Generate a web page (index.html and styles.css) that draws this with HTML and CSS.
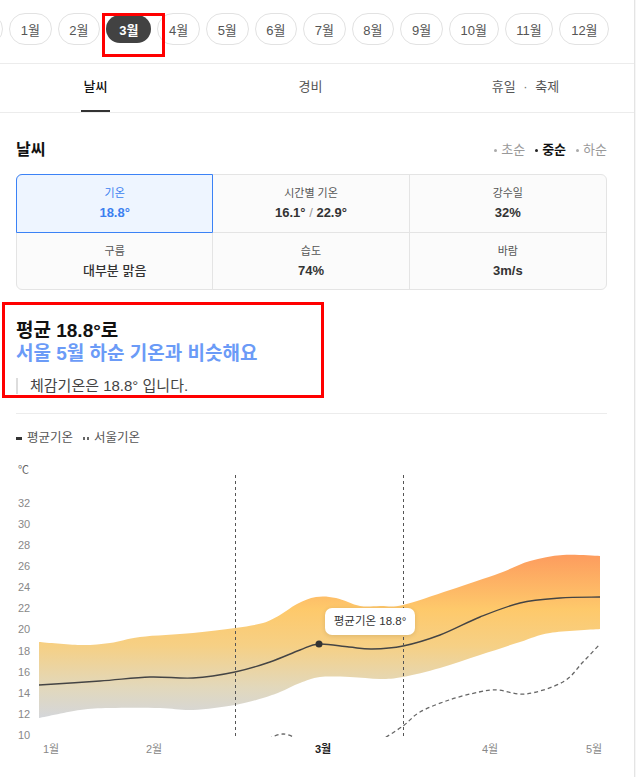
FILE: index.html
```html
<!DOCTYPE html>
<html lang="ko">
<head>
  <meta charset="UTF-8">
  <meta name="viewport" content="width=device-width, initial-scale=1.0">
  <title>여행 날씨 - 3월</title>
  <link rel="stylesheet" href="styles.css">
</head>
<body>
  <div class="page">
    <nav class="months">
      <div class="months-track">
        <button class="chip chip--prev" aria-hidden="true"></button>
        <button class="chip">1월</button>
        <button class="chip">2월</button>
        <button class="chip is-active">3월</button>
        <button class="chip">4월</button>
        <button class="chip">5월</button>
        <button class="chip">6월</button>
        <button class="chip">7월</button>
        <button class="chip">8월</button>
        <button class="chip">9월</button>
        <button class="chip">10월</button>
        <button class="chip">11월</button>
        <button class="chip">12월</button>
      </div>
    </nav>

    <div class="tabs">
      <div class="tabs-track">
        <a class="tab is-active"><span>날씨</span></a>
        <a class="tab"><span>경비</span></a>
        <a class="tab"><span>휴일 <i class="tab-dot">·</i> 축제</span></a>
      </div>
    </div>

    <section class="weather">
      <div class="weather-head">
        <h2>날씨</h2>
        <ul class="period">
          <li>초순</li>
          <li class="is-active">중순</li>
          <li>하순</li>
        </ul>
      </div>

      <div class="stats">
        <div class="stat is-active">
          <span class="stat-label">기온</span>
          <strong class="stat-value">18.8°</strong>
        </div>
        <div class="stat">
          <span class="stat-label">시간별 기온</span>
          <strong class="stat-value">16.1° <em>/</em> 22.9°</strong>
        </div>
        <div class="stat">
          <span class="stat-label">강수일</span>
          <strong class="stat-value">32%</strong>
        </div>
        <div class="stat">
          <span class="stat-label">구름</span>
          <strong class="stat-value stat-value--text">대부분 맑음</strong>
        </div>
        <div class="stat">
          <span class="stat-label">습도</span>
          <strong class="stat-value">74%</strong>
        </div>
        <div class="stat">
          <span class="stat-label">바람</span>
          <strong class="stat-value">3m/s</strong>
        </div>
      </div>

      <div class="summary">
        <p class="summary-main">평균 18.8°로</p>
        <p class="summary-sub">서울 5월 하순 기온과 비슷해요</p>
        <p class="summary-note">체감기온은 18.8° 입니다.</p>
      </div>

      <hr class="divider">

      <div class="legend">
        <span class="legend-item"><i class="mark-solid"></i>평균기온</span>
        <span class="legend-item"><i class="mark-dash"></i>서울기온</span>
      </div>
    </section>

    <div class="chart">
      <svg class="chart-svg" viewBox="0 455 634 322" width="634" height="322">
        <defs>
          <linearGradient id="bandFill" gradientUnits="userSpaceOnUse" x1="0" y1="555" x2="0" y2="720">
            <stop offset="0" stop-color="#fd9c5e"/>
            <stop offset="0.33" stop-color="#fec96b"/>
            <stop offset="0.55" stop-color="#f6d085"/>
            <stop offset="0.8" stop-color="#e2d8bb"/>
            <stop offset="1" stop-color="#d3d6dc"/>
          </linearGradient>
          <clipPath id="plot">
            <rect x="39" y="460" width="562" height="277"/>
          </clipPath>
        </defs>

        <text class="axis-unit" x="18" y="471">℃</text>
        <g class="axis-y">
          <text x="18" y="504">32</text>
          <text x="18" y="525">30</text>
          <text x="18" y="546">28</text>
          <text x="18" y="567">26</text>
          <text x="18" y="588">24</text>
          <text x="18" y="609">22</text>
          <text x="18" y="630">20</text>
          <text x="18" y="652">18</text>
          <text x="18" y="673">16</text>
          <text x="18" y="694">14</text>
          <text x="18" y="715">12</text>
          <text x="18" y="736">10</text>
        </g>

        <g clip-path="url(#plot)">
          <path id="band" fill="url(#bandFill)"/>
          <path id="seoulA" class="line-seoul"/>
          <path id="seoulB" class="line-seoul"/>
          <path id="mean" class="line-mean"/>
        </g>

        <line class="guide" x1="235.5" y1="475" x2="235.5" y2="737"/>
        <line class="guide" x1="403.5" y1="475" x2="403.5" y2="737"/>
        <circle class="point" cx="319" cy="644" r="3.5"/>

        <g class="axis-x">
          <text x="51" y="750">1월</text>
          <text x="154" y="750">2월</text>
          <text class="is-current" x="323" y="750">3월</text>
          <text x="490" y="750">4월</text>
          <text x="594" y="750">5월</text>
        </g>
      </svg>
      <div class="tooltip">평균기온 18.8°</div>
    </div>

    <div class="highlight highlight--month"></div>
    <div class="highlight highlight--summary"></div>
  </div>

  <script>
    (() => {
      // puntos del grafico (coordenadas de la pagina)
      const upper = [[39,642],[80,645],[110,643],[140,637],[193,633],[235,628],[263,623],[280,615],[297,604],[316,597],[336,598],[360,606],[380,606],[403,605],[450,590],[500,573],[530,561],[563,555],[600,556]];
      const lower = [[39,718],[80,710],[110,708],[160,708],[193,710],[235,705],[263,698],[280,692],[300,683],[320,677],[350,677],[380,679],[403,677],[440,668],[480,655],[520,642],[550,633],[600,629]];
      const mean = [[39,685],[100,681],[150,677],[193,678],[235,672],[270,662],[300,650],[319,644],[349,647],[372,649],[403,646],[440,635],[480,617],[520,603],[560,598],[600,597]];
      const seoulA = [[262,742],[283,734],[304,742]];
      const seoulB = [[380,741],[403,726],[420,712],[449,700],[479,692],[498,690],[526,694],[563,682],[583,662],[600,644]];

      const segments = (pts) => {
        let d = '';
        for (let i = 0; i < pts.length - 1; i++) {
          const p0 = pts[i - 1] || pts[i];
          const p1 = pts[i];
          const p2 = pts[i + 1];
          const p3 = pts[i + 2] || p2;
          const c1 = [p1[0] + (p2[0] - p0[0]) / 6, p1[1] + (p2[1] - p0[1]) / 6];
          const c2 = [p2[0] - (p3[0] - p1[0]) / 6, p2[1] - (p3[1] - p1[1]) / 6];
          d += ` C${c1[0].toFixed(1)} ${c1[1].toFixed(1)} ${c2[0].toFixed(1)} ${c2[1].toFixed(1)} ${p2[0]} ${p2[1]}`;
        }
        return d;
      };
      const line = (pts) => `M${pts[0][0]} ${pts[0][1]}` + segments(pts);

      const back = lower.slice().reverse();
      document.querySelector('#band').setAttribute('d', line(upper) + ` L${back[0][0]} ${back[0][1]}` + segments(back) + ' Z');
      document.querySelector('#mean').setAttribute('d', line(mean));
      document.querySelector('#seoulA').setAttribute('d', line(seoulA));
      document.querySelector('#seoulB').setAttribute('d', line(seoulB));
    })();
  </script>
</body>
</html>
```

FILE: styles.css
```css
body {
    margin: 0;
    background: #f6f6f6;
    font-family: "Liberation Sans", "Noto Sans CJK KR", sans-serif;
    color: #333;
}

.page {
    position: relative;
    width: 634px;
    min-height: 777px;
    background: #fff;
    border-right: 1px solid #e4e4e4;
    overflow: hidden;
}

/* meses */
.months {
    padding: 13px 0 18px;
    border-bottom: 1px solid #ececec;
    overflow: hidden;
}

.months-track {
    display: flex;
    align-items: center;
    gap: 6px;
    height: 32px;
    margin-left: -39px;
}

.chip {
    flex: none;
    height: 32px;
    padding: 0 10.7px;
    border: 1px solid #e2e2e2;
    border-radius: 16px;
    background: #fff;
    color: #555;
    font-family: inherit;
    font-size: 13px;
    white-space: nowrap;
}

.chip--prev {
    width: 42px;
}

.chip.is-active {
    height: 28px;
    padding: 0 13px;
    border: none;
    background: #424242;
    color: #fff;
    font-weight: bold;
}

/* tabs */
.tabs {
    border-bottom: 1px solid #ececec;
}

.tabs-track {
    display: grid;
    grid-template-columns: repeat(3, 215px);
    margin-left: -12px;
}

.tab {
    display: flex;
    justify-content: center;
    height: 48px;
    font-size: 13px;
    color: #555;
}

.tab span {
    line-height: 46px;
    padding: 0 3px;
    border-bottom: 2px solid transparent;
}

.tab.is-active span {
    color: #111;
    font-weight: 500;
    border-bottom-color: #333;
}

.tab-dot {
    font-style: normal;
    margin: 0 4px;
    color: #777;
}

/* seccion clima */
.weather {
    padding: 26px 27px 0 16px;
}

.weather-head {
    display: flex;
    justify-content: space-between;
    align-items: center;
}

.weather-head h2 {
    margin: 0;
    font-size: 16px;
    line-height: 22px;
    color: #111;
}

.period {
    display: flex;
    gap: 10px;
    margin: 0;
    padding: 0;
    list-style: none;
    font-size: 13px;
    line-height: 22px;
    color: #999;
}

.period li {
    display: flex;
    align-items: center;
    gap: 4px;
}

.period li::before {
    content: "";
    width: 3px;
    height: 3px;
    border-radius: 50%;
    background: #aaa;
}

.period li.is-active {
    color: #111;
    font-weight: bold;
}

.period li.is-active::before {
    background: #222;
}

.stats {
    display: grid;
    grid-template-columns: repeat(3, 1fr);
    grid-template-rows: 58px 56px;
    margin-top: 13px;
    border: 1px solid #e4e4e4;
    border-radius: 6px;
    background: #fbfbfb;
}

.stat {
    display: flex;
    flex-direction: column;
    align-items: center;
    justify-content: center;
    gap: 2px;
    box-sizing: border-box;
    border-right: 1px solid #e4e4e4;
    border-bottom: 1px solid #e4e4e4;
}

.stat:nth-child(3n) {
    border-right: none;
}

.stat:nth-child(n+4) {
    border-bottom: none;
}

.stat.is-active {
    margin: -1px 0 0 -1px;
    border: 1px solid #3b82f6;
    border-radius: 6px 0 0 0;
    background: #eef5ff;
}

.stat-label {
    font-size: 11px;
    line-height: 16px;
    color: #555;
}

.stat-value {
    font-size: 13px;
    line-height: 19px;
    color: #333;
}

.stat-value em {
    font-style: normal;
    font-weight: normal;
    color: #999;
}

.stat-value--text {
    font-size: 13px;
    font-weight: 500;
}

.stat.is-active .stat-label,
.stat.is-active .stat-value {
    color: #3b7ff0;
}

/* resumen */
.summary {
    margin-top: 29px;
}

.summary p {
    margin: 0;
}

.summary-main,
.summary-sub {
    font-size: 19px;
    line-height: 23px;
    font-weight: bold;
}

.summary-main {
    color: #111;
}

.summary-sub {
    color: #6b9bf7;
}

.summary-note {
    margin-top: 13px !important;
    padding-left: 12px;
    border-left: 2px solid #dddddd;
    font-size: 15px;
    line-height: 16px;
    color: #444;
}

.divider {
    margin: 19px 0 0;
    border: none;
    border-top: 1px solid #ececec;
}

.legend {
    display: flex;
    gap: 10px;
    margin: 16px 0 9px;
    font-size: 12.5px;
    line-height: 16px;
    color: #555;
}

.legend-item {
    display: flex;
    align-items: center;
    gap: 5px;
}

.mark-solid,
.mark-dash {
    width: 6px;
    height: 3px;
}

.mark-solid {
    background: #333;
}

.mark-dash {
    background: linear-gradient(90deg, #666 0 2px, transparent 2px 4px, #666 4px 6px);
}

/* grafico */
.chart {
    position: relative;
    height: 322px;
}

.chart-svg {
    display: block;
}

.axis-unit,
.axis-y text {
    font-size: 11px;
    fill: #888;
    dominant-baseline: middle;
}

.axis-unit {
    fill: #666;
}

.axis-x text {
    font-size: 11px;
    fill: #888;
    text-anchor: middle;
    dominant-baseline: middle;
}

.axis-x text.is-current {
    fill: #222;
    font-weight: bold;
}

.line-mean {
    fill: none;
    stroke: #444;
    stroke-width: 1.4;
}

.line-seoul {
    fill: none;
    stroke: #666;
    stroke-width: 1.3;
    stroke-dasharray: 4 3;
}

.guide {
    stroke: #555;
    stroke-width: 1;
    stroke-dasharray: 3 3;
}

.point {
    fill: #333;
}

.tooltip {
    position: absolute;
    left: 325px;
    top: 153px;
    width: 90px;
    height: 27px;
    border-radius: 7px;
    background: #fff;
    box-shadow: 0 1px 5px rgba(0, 0, 0, 0.12);
    font-size: 11.5px;
    line-height: 27px;
    text-align: center;
    color: #333;
}

/* marcas rojas */
.highlight {
    position: absolute;
    box-sizing: border-box;
    border: 3px solid #ff0000;
    pointer-events: none;
}

.highlight--month {
    left: 102px;
    top: 13px;
    width: 63px;
    height: 44px;
}

.highlight--summary {
    left: 2px;
    top: 302px;
    width: 322px;
    height: 96px;
}
```
